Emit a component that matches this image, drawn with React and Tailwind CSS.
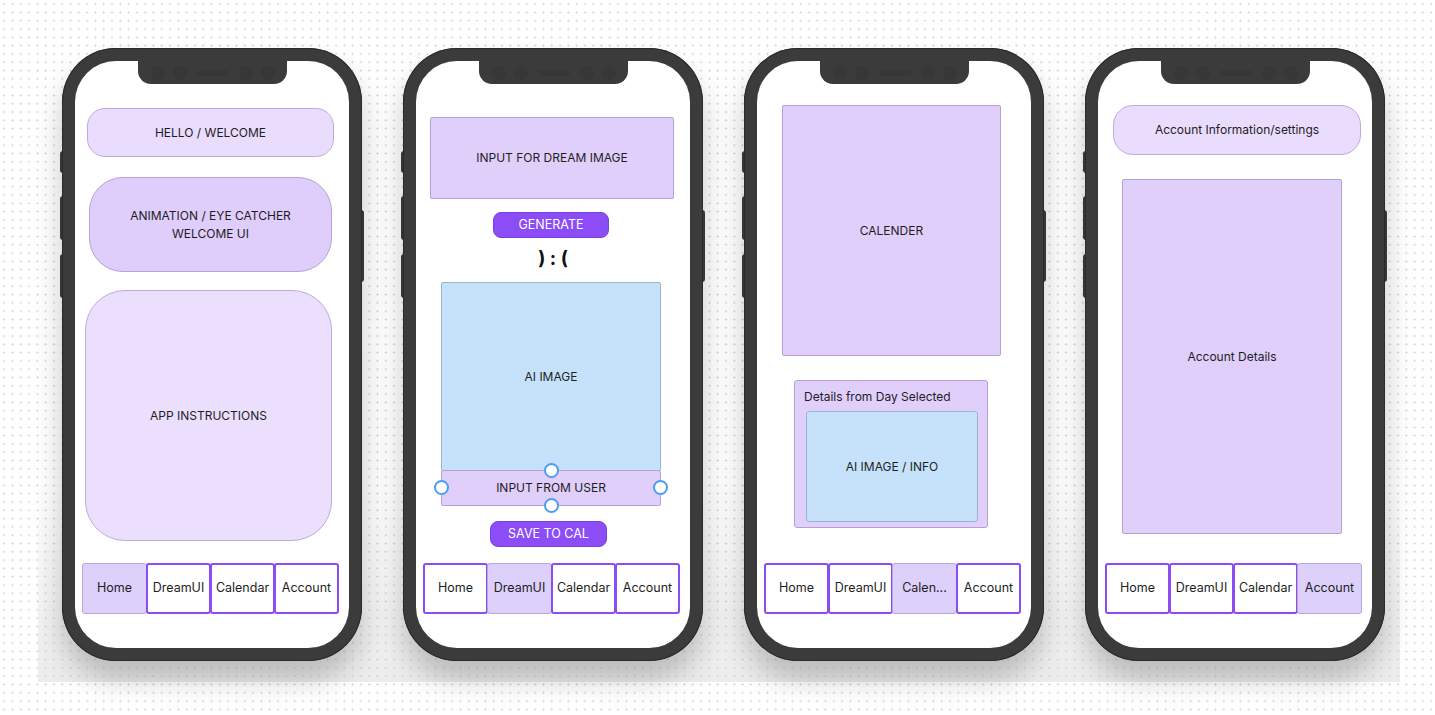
import React from "react";

const tabs = ["Home", "DreamUI", "Calendar", "Account"];

function NavBar({ active, labels = tabs }) {
  return (
    <div className="mt-auto mb-[34px] ml-[7px] flex h-[51px] w-[258px]">
      {labels.map((label, i) => (
        <div
          key={label}
          className={
            "flex h-full w-[65px] items-center justify-center rounded-[3px] text-[12.5px] text-[#1e1e1e] " +
            (i > 0 ? "-ml-[1px] " : "") +
            (i === active
              ? "border-[1.5px] border-[#b9a6d8] bg-[#ddd0fb]"
              : "border-2 border-[#8b4cf6] bg-white")
          }
        >
          {label}
        </div>
      ))}
    </div>
  );
}

function Phone({ children }) {
  return (
    <div className="relative h-[613px] w-[300px] shrink-0 rounded-[54px] bg-[#3b3b3b] p-[13px] shadow-[0_18px_28px_rgba(0,0,0,0.22)]">
      {/* side buttons */}
      <div className="absolute -left-[2px] top-[103px] h-[22px] w-[3px] rounded-l bg-[#363636]" />
      <div className="absolute -left-[2px] top-[148px] h-[44px] w-[3px] rounded-l bg-[#363636]" />
      <div className="absolute -left-[2px] top-[206px] h-[44px] w-[3px] rounded-l bg-[#363636]" />
      <div className="absolute -right-[2px] top-[162px] h-[72px] w-[3px] rounded-r bg-[#363636]" />
      <div className="pointer-events-none absolute inset-0 rounded-[54px] ring-1 ring-inset ring-[#2a2a2a]" />

      <div className="relative flex h-full flex-col overflow-hidden rounded-[41px] bg-white">
        {/* notch */}
        <div className="absolute left-[63px] top-0 flex h-[23px] w-[149px] items-center justify-center gap-[8px] rounded-b-[13px] bg-[#3b3b3b]">
          <span className="h-[14px] w-[14px] rounded-full bg-[#373737]" />
          <span className="h-[14px] w-[14px] rounded-full bg-[#373737]" />
          <span className="mx-[2px] h-[6px] w-[32px] rounded-full bg-[#373737]" />
          <span className="h-[14px] w-[14px] rounded-full bg-[#373737]" />
          <span className="h-[14px] w-[14px] rounded-full bg-[#373737]" />
        </div>
        {children}
      </div>
    </div>
  );
}

const label = "flex items-center justify-center text-center text-[12px] leading-[18px] text-[#1e1e1e]";
const lilac = "border-[1.5px] border-[#b5a1d3] bg-[#e0cffb]";
const blue = "border-[1.5px] border-[#9cb5cc] bg-[#c5e2fa]";
const button =
  "flex items-center justify-center rounded-[8px] border border-[#7a3fe0] bg-[#8c4cf6] text-[12.5px] text-white";

function Handle({ className }) {
  return (
    <span
      className={
        "absolute h-[15px] w-[15px] rounded-full border-2 border-[#4c9df2] bg-white " + className
      }
    />
  );
}

export default function App() {
  return (
    <div className="relative h-[715px] w-full overflow-hidden bg-white font-['Inter',sans-serif]">
      {/* floor shade */}
      <div className="absolute left-[38px] top-[480px] h-[202px] w-[1362px] bg-[linear-gradient(to_bottom,rgba(0,0,0,0),rgba(0,0,0,0.075))]" />
      {/* dot grid */}
      <div className="pointer-events-none absolute inset-0 bg-[radial-gradient(circle,#cfcfcf_0.8px,transparent_1.1px)] bg-[size:8.3px_8.3px]" />

      <div className="relative flex gap-[41px] pl-[62px] pt-[48px]">
        {/* Home */}
        <Phone>
          <div className={label + " mt-[47px] ml-[12px] h-[49px] w-[247px] rounded-[18px] border-[1.5px] border-[#bfa9dd] bg-[#eadcfd]"}>
            HELLO / WELCOME
          </div>
          <div className={label + " mt-[20px] ml-[14px] h-[95px] w-[243px] rounded-[34px] border-[1.5px] border-[#b8a2d8] bg-[#dfcdfb]"}>
            ANIMATION / EYE CATCHER
            <br />
            WELCOME UI
          </div>
          <div className={label + " mt-[18px] ml-[10px] h-[251px] w-[247px] rounded-[40px] border-[1.5px] border-[#bfa9dd] bg-[#ebdffd]"}>
            APP INSTRUCTIONS
          </div>
          <NavBar active={0} />
        </Phone>

        {/* DreamUI */}
        <Phone>
          <div className={label + " " + lilac + " mt-[56px] ml-[14px] h-[82px] w-[244px] rounded-[2px]"}>
            INPUT FOR DREAM IMAGE
          </div>
          <div className={button + " mt-[13px] ml-[77px] h-[26px] w-[116px]"}>GENERATE</div>
          <div className="mt-[11px] flex h-[20px] justify-center text-[19px] font-bold leading-[20px] text-[#111]">
            ) : (
          </div>
          <div className={label + " " + blue + " mt-[13px] ml-[25px] h-[189px] w-[220px] rounded-[2px]"}>
            AI IMAGE
          </div>
          <div className={label + " " + lilac + " relative -mt-[1px] ml-[25px] h-[36px] w-[220px] rounded-[2px]"}>
            INPUT FROM USER
            <Handle className="-top-[8px] left-[102px]" />
            <Handle className="-bottom-[8px] left-[102px]" />
            <Handle className="-left-[8px] top-[9px]" />
            <Handle className="-right-[8px] top-[9px]" />
          </div>
          <div className={button + " mt-[15px] ml-[74px] h-[26px] w-[117px]"}>SAVE TO CAL</div>
          <NavBar active={1} />
        </Phone>

        {/* Calendar */}
        <Phone>
          <div className={label + " " + lilac + " mt-[44px] ml-[25px] h-[251px] w-[219px] rounded-[2px]"}>
            CALENDER
          </div>
          <div className={lilac + " mt-[24px] ml-[37px] flex h-[148px] w-[194px] flex-col rounded-[3px] pl-[9px] pt-[7px]"}>
            <div className="text-[12px] leading-[18px] text-[#1e1e1e]">Details from Day Selected</div>
            <div className={label + " " + blue + " mt-[5px] ml-[2px] h-[111px] w-[172px] rounded-[3px]"}>
              AI IMAGE / INFO
            </div>
          </div>
          <NavBar active={2} labels={["Home", "DreamUI", "Calen...", "Account"]} />
        </Phone>

        {/* Account */}
        <Phone>
          <div className={label + " mt-[44px] ml-[15px] h-[50px] w-[248px] rounded-[20px] border-[1.5px] border-[#bfa9dd] bg-[#eadcfd]"}>
            Account Information/settings
          </div>
          <div className={label + " " + lilac + " mt-[24px] ml-[24px] h-[355px] w-[220px] rounded-[2px]"}>
            Account Details
          </div>
          <NavBar active={3} />
        </Phone>
      </div>
    </div>
  );
}
